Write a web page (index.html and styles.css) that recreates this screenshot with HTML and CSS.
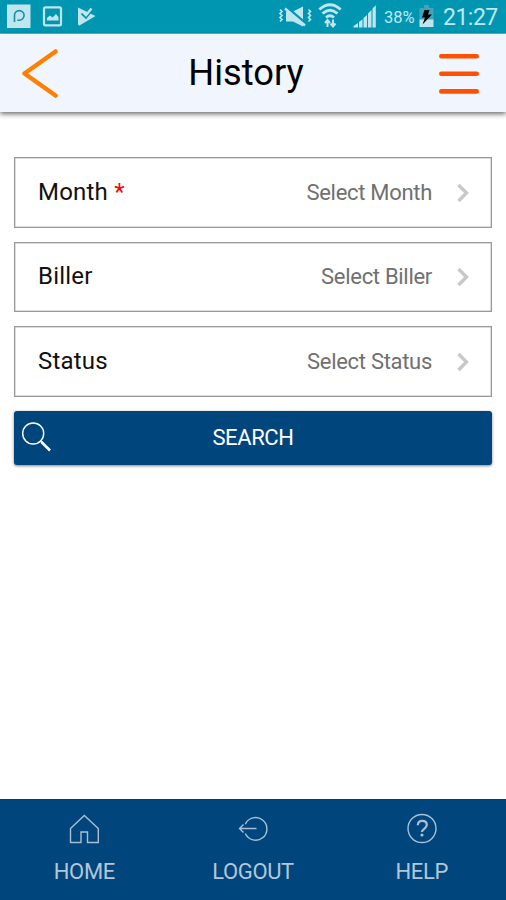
FILE: index.html
```html
<!DOCTYPE html>
<html lang="en">
<head>
<meta charset="utf-8">
<title>History</title>
<link rel="stylesheet" href="styles.css">
</head>
<body>
<div class="screen">
  <div class="status-bar">
    <svg class="notifications" width="100" height="33" viewBox="0 0 100 33">
      <path class="pale" d="M7 4.500H30.500V28H7Z"/>
      <path class="cut-line" d="M14.500 22V15.500a4.800 4.800 0 1 1 4.800 4.700h-2"/>
      <rect class="pale-line" x="44" y="7.300" width="17" height="18" rx="1.500"/>
      <path class="pale" d="M47 20.500V18l3-2.500 2.500 2 3.500-3.500 2.500 3V20.500Z"/>
      <path class="pale" d="M78 7.500L95.500 16 79.500 25.500Q78 25.500 78 24Z"/>
      <path class="cut" d="M81.500 13.500l4.500 4.500L92.500 10"/>
      <path class="tick" d="M82.500 11.500l3.500 3.500L91.500 8.500"/>
    </svg>
    <div class="system">
      <svg width="110" height="33" viewBox="270 0 110 33">
        <path class="pale" d="M286 11.500h7l10-5v20l-10-5h-7Z"/>
        <path class="cut-heavy" d="M286.500 7.500l20 17"/>
        <path class="tick" d="M285 8.500l20 17"/>
        <path class="vibe" d="M280 9.500l2 2-2 2 2 2-2 2 2 2-2 2M308.500 9.500l2 2-2 2 2 2-2 2 2 2-2 2"/>
        <path class="wifi" d="M319.300 9.500q10.700-9.500 21.400 0M322.500 13.500q7.500-6.500 15 0M326 17.500q4-3.500 8 0"/>
        <path class="arrows" d="M327.500 27v-7m-2.500 3l2.500-3 2.500 3M333 19.500v7m-2.500-3l2.500 3 2.500-3"/>
        <path class="pale" d="M353.500 27.500v-1.500l4.500-3v4.500ZM359 22l3.500-2.800v8.300h-3.500ZM363.500 18l3.500-3v12.500h-3.500ZM368 13.500l3.500-3.500v17.500h-3.500ZM372.500 8.500l3.300-3.200v22.200h-3.300Z"/>
      </svg>
      <span class="percent">38%</span>
      <svg class="battery" width="16" height="33" viewBox="418 0 16 33">
        <path class="battery-empty" d="M424 5h5v3h4.500v12h-14V8h4.500Z"/>
        <path class="pale" d="M419.500 19.500h14V27h-14Z"/>
        <path d="M424.500 10h5l-1.500 4.500h4L422.500 24.500l2.500-7h-3Z"/>
      </svg>
      <span class="clock">21:27</span>
    </div>
  </div>
  <header class="header">
    <svg width="36" height="50" viewBox="0 0 36 50"><path class="back" d="M33.500 2.500L2.500 24.500 33.500 46.500"/></svg>
    <h1>History</h1>
    <svg width="40" height="42" viewBox="0 0 40 42"><path class="menu" d="M2.300 3.200H37.700M2.300 20.800H37.700M2.300 38.400H37.700"/></svg>
  </header>
  <main>
    <div class="field"><span class="label">Month <b>*</b></span><span class="value">Select Month</span><svg width="12" height="20" viewBox="0 0 12 20"><path class="chevron" d="M1.500 2L9.500 10 1.500 18"/></svg></div>
    <div class="field"><span class="label">Biller</span><span class="value">Select Biller</span><svg width="12" height="20" viewBox="0 0 12 20"><path class="chevron" d="M1.500 2L9.500 10 1.500 18"/></svg></div>
    <div class="field"><span class="label">Status</span><span class="value">Select Status</span><svg width="12" height="20" viewBox="0 0 12 20"><path class="chevron" d="M1.500 2L9.500 10 1.500 18"/></svg></div>
    <button class="search">
      <svg width="30" height="30" viewBox="0 0 30 30"><circle class="lens" cx="11.200" cy="11.500" r="10.500"/><path class="handle" d="M18.500 19L21 21.500"/><path class="grip" d="M19.500 20l8.500 8.500"/></svg>
      <span>SEARCH</span>
    </button>
  </main>
  <nav class="tabs">
    <a class="tab"><svg width="32" height="32" viewBox="0 0 32 32"><path d="M2.500 15.500L16.300 2.500 30.300 15.500V29.500H19.500V19H13V29.500H2.500Z"/></svg><span>HOME</span></a>
    <a class="tab"><svg width="32" height="32" viewBox="0 0 32 32"><path d="M8.300 11.300A11.300 11.300 0 1 1 8.300 20.500M19.500 15.500H2.500M6.500 11.500L2.500 15.500 6.500 19.500"/></svg><span>LOGOUT</span></a>
    <a class="tab"><svg width="32" height="32" viewBox="0 0 32 32"><circle cx="16" cy="15.500" r="14"/><path class="question" d="M11.800 12.300q0-4.500 4.500-4.500t4.500 4q0 2-2.500 4t-2.200 3.200"/><circle class="dot" cx="16" cy="22" r="1.600"/></svg><span>HELP</span></a>
  </nav>
</div>
</body>
</html>
```
FILE: styles.css
```css
* { box-sizing: border-box; }
body { margin: 0; background: #fff; font-family: Roboto, sans-serif; color: #111; }
svg { display: block; flex: none; fill: none; stroke-linecap: butt; }
.screen { height: 900px; display: flex; flex-direction: column; overflow: hidden; }
.status-bar { height: 34px; flex: none; background: #0096b2; border-bottom: 1px solid #62b6ca; display: flex; justify-content: space-between; color: #c2e7ef; }
.system { display: flex; align-items: center; }
.pale { fill: #bfe6ee; }
.pale-line { stroke: #bfe6ee; stroke-width: 2.2; }
.cut-line { stroke: #168fa9; stroke-width: 1.6; }
.cut { stroke: #0096b2; stroke-width: 1.8; }
.cut-heavy { stroke: #0096b2; stroke-width: 3.5; }
.tick { stroke: #bfe6ee; stroke-width: 2.3; }
.vibe { stroke: #bfe6ee; stroke-width: 1.6; }
.wifi { stroke: #bfe6ee; stroke-width: 2.8; }
.arrows { stroke: #bfe6ee; stroke-width: 2; }
.battery path:last-child { fill: #000; }
.battery-empty { fill: #3fa5bc; }
.percent { width: 38px; padding-left: 4px; font-size: 16.500px; line-height: 33px; white-space: nowrap; padding-top: 2px; }
.clock { width: 72px; padding-left: 9px; font-size: 23px; letter-spacing: -.5px; line-height: 33px; padding-top: 1px; }
.header { height: 78px; flex: none; background: #f1f6fe; padding: 2px 27px 0 22px; display: flex; align-items: center; justify-content: space-between; box-shadow: 0 2px 5px rgba(0,0,0,.58); }
h1 { margin: 0; padding: 0 5px 2px 0; font-size: 36.300px; line-height: 42px; font-weight: 400; color: #000; }
.back { stroke: #ff8000; stroke-width: 4.5; stroke-linecap: round; stroke-linejoin: round; }
.menu { stroke: #ff5000; stroke-width: 4.6; stroke-linecap: round; }
main { flex: 1; padding: 45px 14px 0; display: flex; flex-direction: column; gap: 14px; }
.field { height: 70.500px; border: 1.500px solid #999; box-shadow: inset 0 0 0 .5px #bbb; padding: 1px 22.500px 0 23px; display: flex; align-items: center; }
.label { flex: 1; font-size: 24px; letter-spacing: .2px; line-height: 30px; padding-bottom: 2px; }
.label b { font-weight: 400; color: #f00; }
.value { font-size: 22px; letter-spacing: -.3px; line-height: 30px; color: #707070; margin-right: 24.500px; }
.chevron { stroke: #c7c7cc; stroke-width: 3.4; }
.search { height: 54px; border: 0; border-radius: 3px; background: #00457c; color: #fff; font: 400 22px Roboto, sans-serif; letter-spacing: -.4px; padding: 0 8px 1px; display: grid; grid-template-columns: 30px 1fr 30px; align-items: center; box-shadow: 0 1px 3px rgba(0,0,0,.5); }
.lens { stroke: #fff; stroke-width: 1.4; }
.handle { stroke: #fff; stroke-width: 1.5; }
.grip { stroke: #fff; stroke-width: 2.6; }
.tabs { height: 101px; flex: none; background: #00457c; border-top: 1px solid #173671; display: flex; color: #b2c7d8; }
.tab { flex: 1; display: flex; flex-direction: column; align-items: center; padding-top: 13px; font-size: 22px; letter-spacing: -.35px; line-height: 28px; }
.tab svg { stroke: #a9c0d4; stroke-width: 1.4; }
.tab span { margin-top: 13px; }
.tab .question { stroke-width: 2.2; }
.tab .dot { fill: #a9c0d4; stroke: none; }
```
